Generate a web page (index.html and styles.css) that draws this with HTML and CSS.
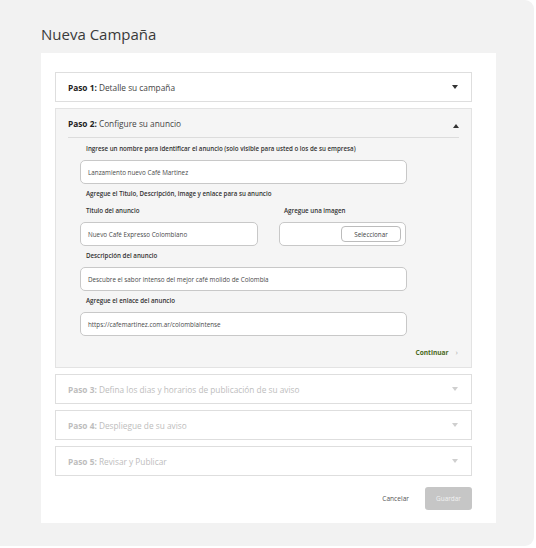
FILE: index.html
```html
<!DOCTYPE html>
<html lang="es">
<head>
<meta charset="utf-8">
<title>Nueva Campaña</title>
<link rel="stylesheet" href="styles.css">
</head>
<body>
<div class="page">
  <h1 class="title">Nueva Campaña</h1>
  <div class="card">
    <div class="steps">
      <div class="step">
        <div class="step-head"><span><b>Paso 1:</b> Detalle su campaña</span><span class="tri tri-down"></span></div>
      </div>
      <div class="step step-open">
        <div class="step-head"><span><b>Paso 2:</b> Configure su anuncio</span><span class="tri tri-up"></span></div>
        <div class="step-body">
          <div class="label l-first">Ingrese un nombre para identificar el anuncio (solo visible para usted o los de su empresa)</div>
          <div class="input wide">Lanzamiento nuevo Café Martinez</div>
          <div class="label l-section">Agregue el Titulo, Descripción, image y enlace para su anuncio</div>
          <div class="row">
            <div class="col col-title">
              <div class="label">Titulo del anuncio</div>
              <div class="input">Nuevo Café Expresso Colombiano</div>
            </div>
            <div class="col col-image">
              <div class="label">Agregue una imagen</div>
              <div class="input file"><span class="btn-select">Seleccionar</span></div>
            </div>
          </div>
          <div class="label l-gap">Descripción del anuncio</div>
          <div class="input wide">Descubre el sabor intenso del mejor café molido de Colombia</div>
          <div class="label l-gap">Agregue el enlace del anuncio</div>
          <div class="input wide">https://cafemartinez.com.ar/colombiaintense</div>
          <div class="continue"><span class="continue-text">Continuar</span><span class="chev">›</span></div>
        </div>
      </div>
      <div class="step disabled">
        <div class="step-head"><span><b>Paso 3:</b> Defina los dias y horarios de publicación de su aviso</span><span class="tri tri-down"></span></div>
      </div>
      <div class="step disabled">
        <div class="step-head"><span><b>Paso 4:</b> Despliegue de su aviso</span><span class="tri tri-down"></span></div>
      </div>
      <div class="step disabled">
        <div class="step-head"><span><b>Paso 5:</b> Revisar y Publicar</span><span class="tri tri-down"></span></div>
      </div>
    </div>
    <div class="footer">
      <span class="cancel">Cancelar</span>
      <span class="save">Guardar</span>
    </div>
  </div>
</div>
</body>
</html>
```
FILE: styles.css
```css
* { box-sizing: border-box; }
html, body { margin: 0; padding: 0; background: #ffffff; }
body { font-family: "Open Sans", "Noto Sans", sans-serif; color: #333; }

.page {
  width: 534px;
  height: 546px;
  background: #f2f2f2;
  border-radius: 0 9px 9px 0;
  padding: 24px 0 0 41px;
}
.title {
  margin: 0 0 9px 0;
  font-size: 15px;
  line-height: 20px;
  font-weight: 400;
  color: #3a3a3a;
}
.card {
  width: 455px;
  background: #ffffff;
  padding: 19px 24px 13px 14px;
}
.steps { display: flex; flex-direction: column; gap: 6px; }
.step {
  border: 1px solid #dedede;
  background: #fff;
}
.step-head {
  height: 28px;
  display: flex;
  align-items: center;
  justify-content: space-between;
  padding: 0 13px 0 12px;
  font-size: 8.3px;
  color: #444;
}
.step-head b { font-weight: 700; color: #222; }
.tri {
  width: 0; height: 0;
  border-left: 3.5px solid transparent;
  border-right: 3.5px solid transparent;
}
.tri-down { border-top: 4px solid #333; }
.tri-up { border-bottom: 4px solid #333; margin-top: 6px; }
.step-open { background: #f5f5f5; border-color: #e3e3e3; }
.step-open .step-head { border-bottom: 1px solid #dcdcdc; margin: 0 12px; padding: 0; height: 29px; }
.disabled .step-head, .disabled .step-head b { color: #bdbdbd; }
.disabled .tri-down { border-top-color: #cfcfcf; }

.step-body {
  padding: 7px 13px 11px 24px;
  display: flex;
  flex-direction: column;
}
.label {
  font-size: 6.2px;
  line-height: 8px;
  font-weight: 600;
  color: #333;
  padding-left: 6px;
  margin-bottom: 7px;
  white-space: nowrap;
}
.l-section { margin-top: 6px; margin-bottom: 0; }
.row { display: flex; gap: 21px; margin-top: 9px; }
.col { display: flex; flex-direction: column; }
.col-title { width: 178px; }
.col-image { width: 127px; }
.col-image .label { padding-left: 5px; }
.l-gap { margin-top: 6px; }
.input {
  height: 24px;
  background: #fff;
  border: 1px solid #c8c8c8;
  border-radius: 5px;
  padding: 0 7px;
  display: flex;
  align-items: center;
  font-size: 6.3px;
  color: #4a4a4a;
  white-space: nowrap;
}
.wide { width: 327px; }
.file { justify-content: flex-end; padding: 0 4px; }
.btn-select {
  width: 60px;
  height: 16px;
  border: 1px solid #bcbcbc;
  border-radius: 4px;
  background: #fff;
  display: flex;
  align-items: center;
  justify-content: center;
  font-size: 6.3px;
  color: #444;
}
.continue {
  display: flex;
  justify-content: flex-end;
  align-items: center;
  margin-top: 12px;
  height: 8px;
}
.continue-text { font-size: 6.6px; font-weight: 700; color: #4b6a22; }
.chev { font-size: 8px; color: #b0b0b0; margin-left: 7px; line-height: 8px; }

.footer {
  display: flex;
  justify-content: flex-end;
  align-items: center;
  margin-top: 11px;
  gap: 16px;
}
.cancel { font-size: 6.6px; color: #555; }
.save {
  width: 47px;
  height: 23px;
  background: #c6c6c6;
  border-radius: 3px;
  color: #f2f2f2;
  font-size: 6.4px;
  display: flex;
  align-items: center;
  justify-content: center;
}
```
